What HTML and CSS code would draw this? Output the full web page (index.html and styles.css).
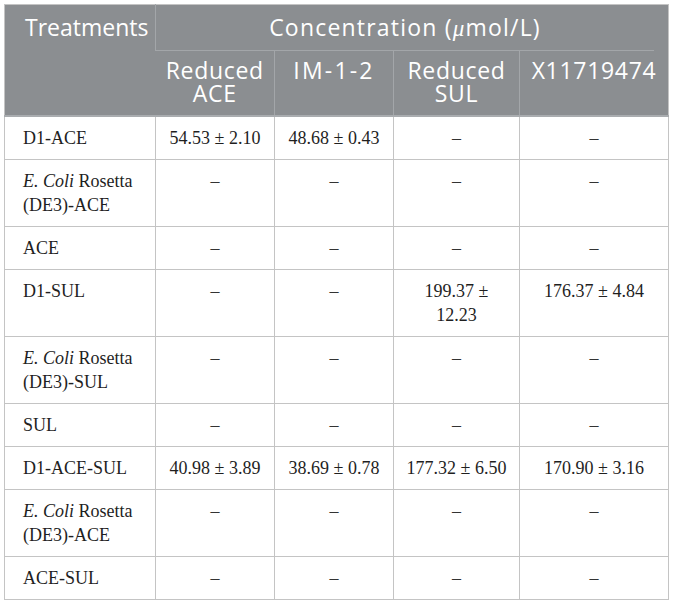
FILE: index.html
```html
<!DOCTYPE html>
<html>
<head>
<meta charset="utf-8">
<link rel="stylesheet" href="styles.css">
</head>
<body>
<table class="data">
  <colgroup>
    <col class="c1"><col class="c2"><col class="c3"><col class="c4"><col class="c5">
  </colgroup>
  <thead>
    <tr class="h1">
      <th rowspan="2" class="treat">Treatments</th>
      <th colspan="4" class="conc"><div class="conc-in">Concentration (<span class="mu">μ</span>mol/L)</div></th>
    </tr>
    <tr class="h2">
      <th>Reduced<br>ACE</th>
      <th class="im">IM-1-2</th>
      <th>Reduced<br>SUL</th>
      <th>X11719474</th>
    </tr>
  </thead>
  <tbody>
    <tr><td>D1-ACE</td><td>54.53 ± 2.10</td><td>48.68 ± 0.43</td><td class="d">–</td><td class="d">–</td></tr>
    <tr><td><i>E. Coli</i> Rosetta (DE3)-ACE</td><td class="d">–</td><td class="d">–</td><td class="d">–</td><td class="d">–</td></tr>
    <tr><td>ACE</td><td class="d">–</td><td class="d">–</td><td class="d">–</td><td class="d">–</td></tr>
    <tr><td>D1-SUL</td><td class="d">–</td><td class="d">–</td><td>199.37 ±<br>12.23</td><td>176.37 ± 4.84</td></tr>
    <tr><td><i>E. Coli</i> Rosetta (DE3)-SUL</td><td class="d">–</td><td class="d">–</td><td class="d">–</td><td class="d">–</td></tr>
    <tr><td>SUL</td><td class="d">–</td><td class="d">–</td><td class="d">–</td><td class="d">–</td></tr>
    <tr><td>D1-ACE-SUL</td><td>40.98 ± 3.89</td><td>38.69 ± 0.78</td><td>177.32 ± 6.50</td><td>170.90 ± 3.16</td></tr>
    <tr><td><i>E. Coli</i> Rosetta (DE3)-ACE</td><td class="d">–</td><td class="d">–</td><td class="d">–</td><td class="d">–</td></tr>
    <tr><td>ACE-SUL</td><td class="d">–</td><td class="d">–</td><td class="d">–</td><td class="d">–</td></tr>
  </tbody>
</table>
</body>
</html>
```
FILE: styles.css
```css
html, body {
  margin: 0;
  background: #ffffff;
}
body {
  padding: 4px 0 0 4px;
}
.data {
  border-collapse: collapse;
  table-layout: fixed;
  width: 664px;
  border: 1px solid #c4c4c4;
}
.c1 { width: 151px; }
.c2 { width: 119px; }
.c3 { width: 119px; }
.c4 { width: 126px; }
.c5 { width: 149px; }

thead th {
  background: #8b8e91;
  color: #ffffff;
  font-family: "Open Sans", "Liberation Sans", sans-serif;
  font-weight: 400;
  font-size: 23px;
  line-height: 23px;
  letter-spacing: 0.7px;
  border-left: 1px solid #a3a6a9;
  vertical-align: top;
}
thead th:first-child { border-left: none; }
.treat {
  text-align: left;
  line-height: 26px;
  letter-spacing: 0;
  padding: 9px 4px 0 20px;
  border-bottom: 2px solid #a9acaf;
}
.conc {
  padding: 0;
  height: 46px;
}
.conc-in {
  height: 46px;
  box-sizing: border-box;
  padding: 9px 0 0 0;
  margin-right: 14px;
  line-height: 26px;
  letter-spacing: 1.2px;
  text-align: center;
  border-bottom: 1px solid #a3a6a9;
}
.mu {
  font-family: "Liberation Serif", serif;
  font-style: italic;
}
.h2 th {
  height: 56px;
  padding: 8px 2px 0 2px;
  text-align: center;
  border-bottom: 2px solid #a9acaf;
}
.h2 th.im {
  letter-spacing: 2.2px;
}

tbody td {
  font-family: "Liberation Serif", "Times New Roman", serif;
  font-size: 18px;
  line-height: 24px;
  color: #1f1f1f;
  padding: 9px 8px 9px 8px;
  border: 1px solid #c4c4c4;
  text-align: center;
  vertical-align: top;
}
tbody td:first-child {
  text-align: left;
  padding-left: 18px;
  padding-right: 10px;
}
tbody td.d {
  color: #333;
}
```
